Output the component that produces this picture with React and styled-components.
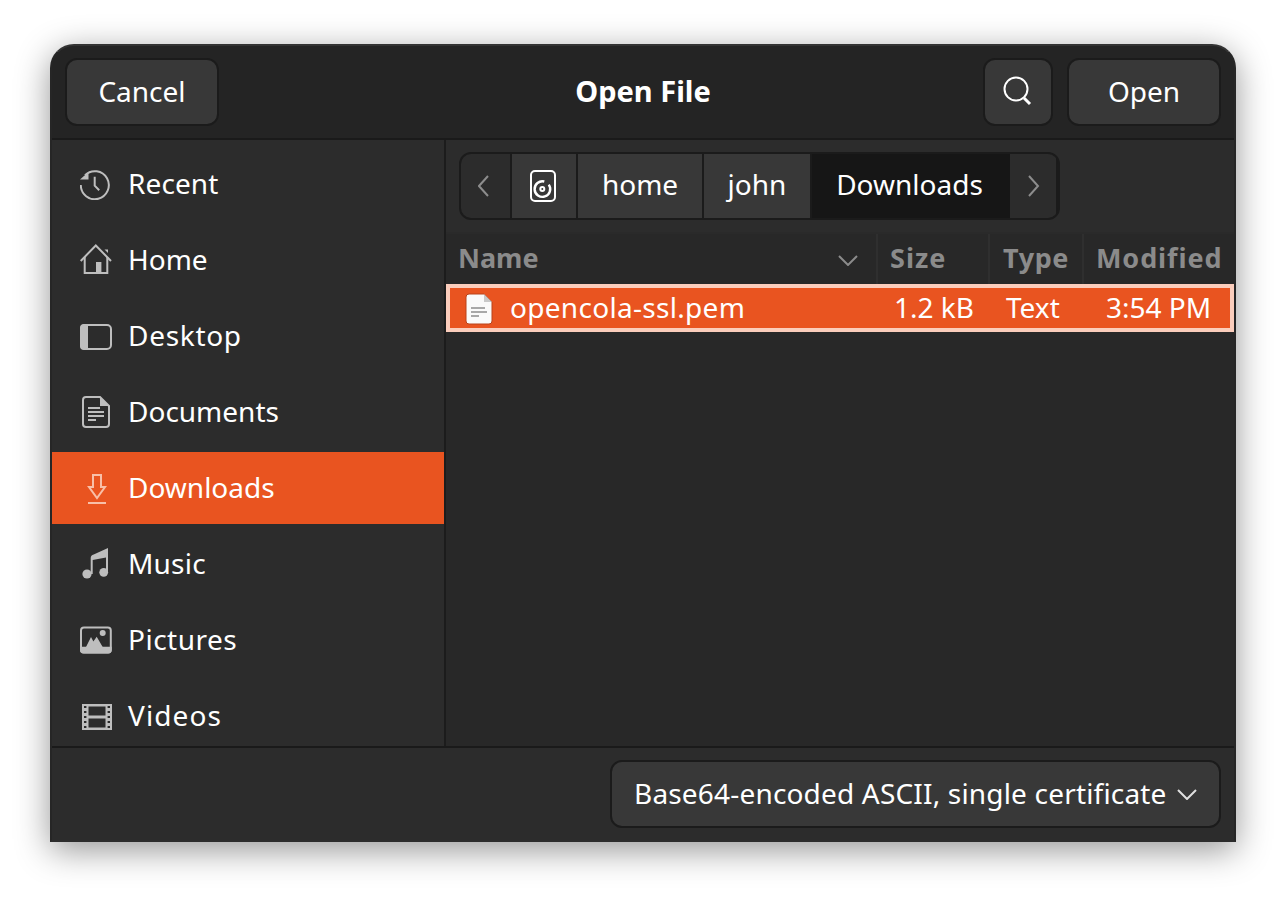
import React from "react";
import styled, { createGlobalStyle } from "styled-components";

const GlobalStyle = createGlobalStyle`
  html, body {
    margin: 0;
    padding: 0;
    background: #ffffff;
  }
  body {
    font-family: "Noto Sans", "Open Sans", sans-serif;
  }
`;

const Page = styled.div`
  width: 1286px;
  height: 898px;
  box-sizing: border-box;
  padding: 44px 50px 56px;
  overflow: hidden;
`;
const Window = styled.div`
  display: flex;
  flex-direction: column;
  height: 798px;
  box-sizing: border-box;
  border: 2px solid #262626;
  border-top-color: #333333;
  border-bottom-color: #2c2c2c;
  border-radius: 24px 24px 0 0;
  background: #2c2c2c;
  box-shadow: 0 8px 34px rgba(0, 0, 0, 0.42);
  color: #ffffff;
  font-size: 28px;
  overflow: hidden;
`;
const HeaderBar = styled.header`
  display: grid;
  grid-template-columns: 1fr auto 1fr;
  align-items: center;
  height: 94px;
  flex: none;
  box-sizing: border-box;
  padding: 0 13px;
  background: #242424;
  border-bottom: 2px solid #1a1a1a;
`;
const HeaderSide = styled.div`
  display: flex;
  gap: 14px;
  justify-content: ${(p) => (p.$end ? "flex-end" : "flex-start")};
`;
const Button = styled.button`
  display: flex;
  align-items: center;
  justify-content: center;
  width: ${(p) => p.$width || 154}px;
  height: 68px;
  box-sizing: border-box;
  padding: 0 0 3px;
  border: 2px solid #1b1b1b;
  border-radius: 12px;
  background: #383838;
  color: #ffffff;
  font: inherit;
`;
const SearchIcon = styled.svg`
  width: 32px;
  height: 32px;
  margin: 1px 2px 0 0;
`;
const Title = styled.div`
  padding-bottom: 4px;
  font-weight: 700;
  font-size: 29px;
`;
const Main = styled.div`
  display: flex;
  flex: 1;
  min-height: 0;
`;
const Sidebar = styled.nav`
  display: flex;
  flex-direction: column;
  gap: 4px;
  flex: none;
  width: 394px;
  box-sizing: border-box;
  padding-top: 8px;
  background: #2c2c2c;
  border-right: 2px solid #1c1c1c;
  overflow: hidden;
`;
const PlaceRow = styled.div`
  display: flex;
  align-items: center;
  gap: 17px;
  height: 72px;
  flex: none;
  padding-left: 28px;
  background: ${(p) => (p.$active ? "#e95420" : "transparent")};
`;
const PlaceIcon = styled.svg`
  width: 32px;
  height: 32px;
  flex: none;
  color: ${(p) => (p.$active ? "#f8bfa8" : "#bebebe")};
`;
const PlaceLabel = styled.span`
  margin: 0 0 2px -1px;
  letter-spacing: ${(p) => p.$tracking || 0}px;
`;
const Content = styled.section`
  display: flex;
  flex-direction: column;
  flex: 1;
  min-width: 0;
  background: #282828;
`;
const PathArea = styled.div`
  display: flex;
  height: 94px;
  flex: none;
  box-sizing: border-box;
  padding: 12px 13px;
  background: #2c2c2c;
  border-bottom: 2px solid #2a2a2a;
`;
const PathBar = styled.div`
  display: flex;
  height: 68px;
  box-sizing: border-box;
  border: 2px solid #1b1b1b;
  border-radius: 12px;
  background: #1b1b1b;
  overflow: hidden;
`;
const PathCell = styled.div`
  display: flex;
  align-items: center;
  justify-content: center;
  width: ${(p) => p.$width}px;
  box-sizing: border-box;
  margin-right: ${(p) => (p.$flush ? 0 : 2)}px;
  padding: 0 ${(p) => (p.$flush ? 3 : 0)}px 4px 0;
  background: ${(p) => (p.$current ? "#161616" : p.$arrow ? "#2c2c2c" : "#383838")};
`;
const PathArrow = styled.svg`
  width: 16px;
  height: 24px;
  margin-top: 4px;
  color: #8c8c8c;
`;
const DiskIcon = styled.svg`
  width: 28px;
  height: 32px;
  margin: 4px 2px 0 0;
  color: #ffffff;
`;
const ColumnHeader = styled.div`
  display: grid;
  grid-template-columns: 432px 112px 94px 1fr;
  height: 50px;
  flex: none;
  box-sizing: border-box;
  background: #282828;
`;
const ColumnTitle = styled.div`
  display: flex;
  align-items: center;
  justify-content: space-between;
  padding: 0 18px 4px ${(p) => p.$pad || 12}px;
  border-right: ${(p) => (p.$last ? "none" : "2px solid #2f2f2f")};
  color: #8b8b8b;
  font-weight: 700;
  font-size: 27px;
  letter-spacing: ${(p) => p.$tracking || 0}px;
  white-space: nowrap;
`;
const Chevron = styled.svg`
  width: 20px;
  height: 11px;
  flex: none;
`;
const NameChevron = styled(Chevron)`
  margin-top: 6px;
  color: #8b8b8b;
`;
const FileRow = styled.div`
  display: grid;
  grid-template-columns: 427px 112px 94px 1fr;
  align-items: center;
  height: 48px;
  flex: none;
  box-sizing: border-box;
  border: 4px solid #fbcdbc;
  padding-bottom: 3px;
  background: #e95420;
`;
const FileName = styled.div`
  display: flex;
  align-items: center;
  gap: 17px;
  padding-left: 15px;
  letter-spacing: 0.3px;
`;
const FileIcon = styled.svg`
  width: 28px;
  height: 32px;
  flex: none;
  margin-top: 3px;
`;
const Cell = styled.div`
  padding-left: ${(p) => p.$pad || 0}px;
  white-space: nowrap;
`;
const Empty = styled.div`
  flex: 1;
`;
const Footer = styled.footer`
  display: flex;
  justify-content: flex-end;
  align-items: flex-start;
  height: 94px;
  flex: none;
  box-sizing: border-box;
  padding: 12px 13px 0;
  background: #2c2c2c;
  border-top: 2px solid #1a1a1a;
`;
const Combo = styled.div`
  display: flex;
  align-items: center;
  gap: 10px;
  width: 611px;
  height: 68px;
  box-sizing: border-box;
  padding: 0 0 3px 22px;
  border: 2px solid #1b1b1b;
  border-radius: 12px;
  background: #383838;
  letter-spacing: 0.18px;
  white-space: nowrap;
`;
const ComboChevron = styled(Chevron)`
  margin-top: 3px;
`;

const icons = {
  recent: (
    <g fill="none" stroke="currentColor" strokeWidth="2">
      <path d="M5 7.2A14 14 0 1 1 0.8 17" />
      <path d="M14.7 8.7v9l4.5 4.5" />
      <path d="M0 11.5L8.5 4v7.5z" fill="currentColor" stroke="none" />
    </g>
  ),
  home: (
    <g fill="none" stroke="currentColor" strokeWidth="2">
      <path d="M0.7 17L15.8 1.5 31 17" />
      <path d="M4.7 13v16h22.6V13" />
      <path d="M16 18h5.4v11H16z" fill="currentColor" stroke="none" />
      <path d="M24.5 5.5H28V9z" fill="currentColor" stroke="none" />
    </g>
  ),
  desktop: (
    <g>
      <rect x="1" y="5" width="30" height="24" rx="4" fill="none" stroke="currentColor" strokeWidth="2" />
      <path d="M4 4h4v26H4a4 4 0 0 1-4-4V8a4 4 0 0 1 4-4z" fill="currentColor" />
    </g>
  ),
  documents: (
    <g fill="none" stroke="currentColor" strokeWidth="2">
      <path d="M6 1h14l9 9v18a3 3 0 0 1-3 3H6a3 3 0 0 1-3-3V4a3 3 0 0 1 3-3z" />
      <path d="M20 1l9 9h-9z" fill="currentColor" stroke="none" />
      <path d="M8 12h12M8 16h16M8 20h16M8 24h8" />
    </g>
  ),
  downloads: (
    <g fill="none" stroke="currentColor" strokeWidth="2">
      <path d="M13 3h8v12h4l-8 11-8-11h4z" />
      <path d="M8 31h18" />
    </g>
  ),
  music: (
    <g fill="currentColor">
      <path d="M10.7 26V10q0-3 3-3.6L28 0v24h-2V9.5L12.7 12v14z" />
      <circle cx="7" cy="26" r="4.6" />
      <circle cx="23.7" cy="24.3" r="4.4" />
    </g>
  ),
  pictures: (
    <g>
      <rect x="1" y="3.6" width="29.8" height="25" rx="3" fill="none" stroke="currentColor" strokeWidth="2" />
      <path d="M0 22.7h31.7V26a3.4 3.4 0 0 1-3.4 3.4H3.4A3.4 3.4 0 0 1 0 26z" fill="currentColor" />
      <path d="M6 23l5-10 2.4 4.4 3.3-4.7L22.7 23z" fill="currentColor" />
      <circle cx="22.7" cy="9" r="3" fill="currentColor" />
    </g>
  ),
  videos: (
    <g>
      <path
        d="M2 4h30v26H2zM8.5 6.5v9h17v-9zM8.5 18.5v9h17v-9z"
        fill="currentColor"
        fillRule="evenodd"
      />
      <path
        d="M4 6h2.4v2H4zM4 11h2.4v2H4zM4 16h2.4v2H4zM4 21h2.4v2H4zM4 26h2.4v2H4zM27.6 6H30v2h-2.4zM27.6 11H30v2h-2.4zM27.6 16H30v2h-2.4zM27.6 21H30v2h-2.4zM27.6 26H30v2h-2.4z"
        fill="#2c2c2c"
      />
    </g>
  ),
};

const places = [
  { id: "recent", label: "Recent", tracking: 0.1 },
  { id: "home", label: "Home" },
  { id: "desktop", label: "Desktop", tracking: 0.7 },
  { id: "documents", label: "Documents" },
  { id: "downloads", label: "Downloads", active: true },
  { id: "music", label: "Music", tracking: 0.2 },
  { id: "pictures", label: "Pictures", tracking: 0.5 },
  { id: "videos", label: "Videos", tracking: 1.1 },
];

const App = () => {
  return (
    <Page>
      <GlobalStyle />
      <Window>
        <HeaderBar>
          <HeaderSide>
            <Button>Cancel</Button>
          </HeaderSide>
          <Title>Open File</Title>
          <HeaderSide $end>
            <Button $width={70} aria-label="Search">
              <SearchIcon viewBox="0 0 32 32" fill="none" stroke="#fff" strokeWidth="2">
                <circle cx="15" cy="14" r="11.5" />
                <path d="M23 23l6 6" strokeWidth="3" />
              </SearchIcon>
            </Button>
            <Button>Open</Button>
          </HeaderSide>
        </HeaderBar>
        <Main>
          <Sidebar>
            {places.map((p) => (
              <PlaceRow key={p.id} $active={p.active}>
                <PlaceIcon viewBox="0 0 32 32" $active={p.active}>
                  {icons[p.id]}
                </PlaceIcon>
                <PlaceLabel $tracking={p.tracking}>{p.label}</PlaceLabel>
              </PlaceRow>
            ))}
          </Sidebar>
          <Content>
            <PathArea>
              <PathBar>
                <PathCell $width={49} $arrow>
                  <PathArrow viewBox="0 0 16 24" fill="none" stroke="currentColor" strokeWidth="2">
                    <path d="M10 2L1 12l9 10" />
                  </PathArrow>
                </PathCell>
                <PathCell $width={64}>
                  <DiskIcon viewBox="0 0 28 32" fill="none" stroke="currentColor" strokeWidth="2">
                    <rect x="2" y="1" width="24" height="30" rx="4" />
                    <circle cx="13.3" cy="19" r="2" />
                    <path d="M19.8 14.6A7.8 7.8 0 1 1 15.3 11.5" strokeWidth="2.4" />
                  </DiskIcon>
                </PathCell>
                <PathCell $width={124}>home</PathCell>
                <PathCell $width={106}>john</PathCell>
                <PathCell $width={198} $current $flush>
                  Downloads
                </PathCell>
                <PathCell $width={46} $arrow>
                  <PathArrow viewBox="0 0 16 24" fill="none" stroke="currentColor" strokeWidth="2">
                    <path d="M4 2l9 10-9 10" />
                  </PathArrow>
                </PathCell>
              </PathBar>
            </PathArea>
            <ColumnHeader>
              <ColumnTitle>
                Name
                <NameChevron viewBox="0 0 20 11" fill="none" stroke="currentColor" strokeWidth="2">
                  <path d="M1 1l9 9 9-9" />
                </NameChevron>
              </ColumnTitle>
              <ColumnTitle $tracking={1}>Size</ColumnTitle>
              <ColumnTitle $tracking={0.6} $pad={13}>
                Type
              </ColumnTitle>
              <ColumnTitle $last $tracking={0.9}>
                Modified
              </ColumnTitle>
            </ColumnHeader>
            <FileRow>
              <FileName>
                <FileIcon viewBox="0 0 28 32">
                  <path
                    d="M4 1h15l8 8v19a3 3 0 0 1-3 3H4a3 3 0 0 1-3-3V4a3 3 0 0 1 3-3z"
                    fill="#fafafa"
                    stroke="#b8421a"
                  />
                  <path d="M19 1l8 8h-8z" fill="#c9c9c9" />
                  <path d="M6 15h14M6 19h16M6 23h8" stroke="#a8a8a8" strokeWidth="2" />
                </FileIcon>
                opencola-ssl.pem
              </FileName>
              <Cell $pad={17}>1.2 kB</Cell>
              <Cell $pad={17}>Text</Cell>
              <Cell $pad={23}>3:54 PM</Cell>
            </FileRow>
            <Empty />
          </Content>
        </Main>
        <Footer>
          <Combo>
            Base64-encoded ASCII, single certificate
            <ComboChevron viewBox="0 0 20 11" fill="none" stroke="#e0e0e0" strokeWidth="2">
              <path d="M1 1l9 9 9-9" />
            </ComboChevron>
          </Combo>
        </Footer>
      </Window>
    </Page>
  );
};

export default App;
